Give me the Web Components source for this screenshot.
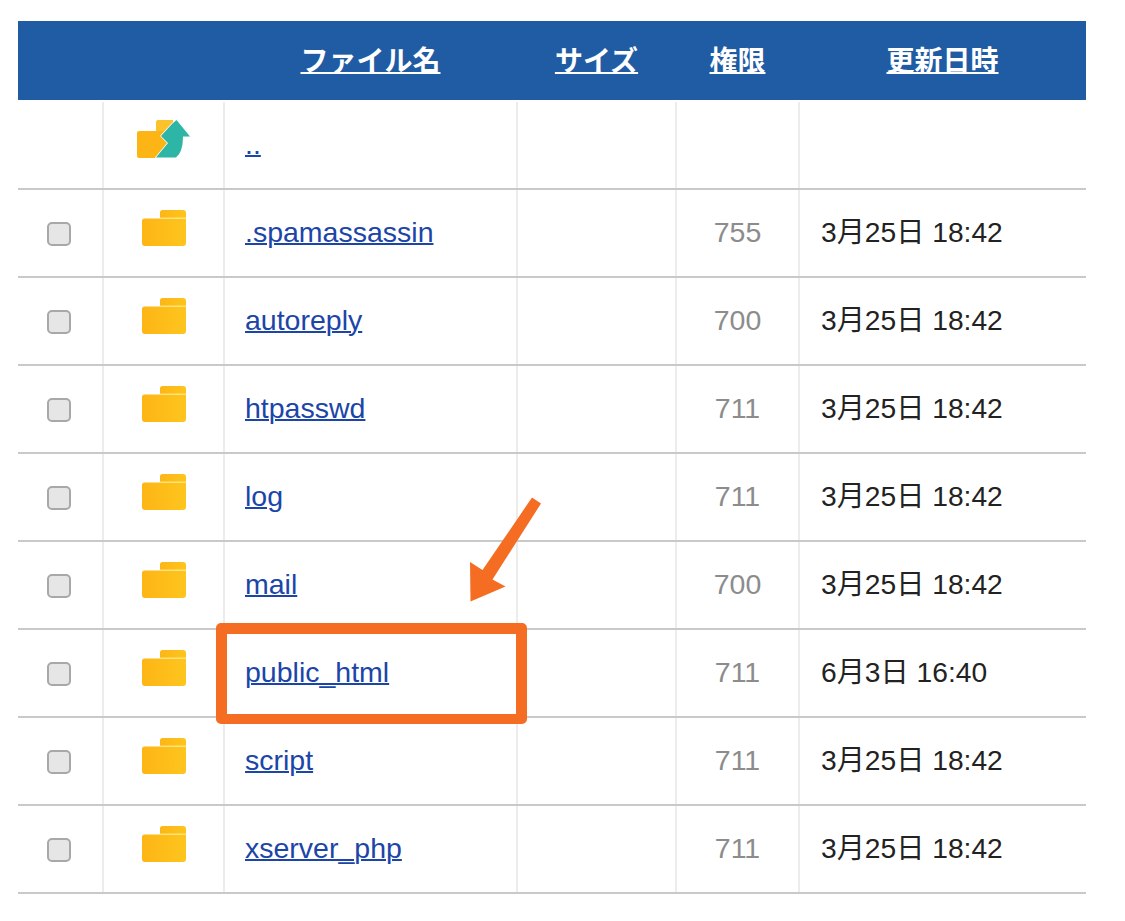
<!DOCTYPE html>
<html lang="ja">
<head>
<meta charset="utf-8">
<title>ファイル一覧</title>
<style>
  html, body { margin: 0; background: #fff; }
  body { font-family: "Liberation Sans", "Noto Sans CJK JP", sans-serif; }
</style>
</head>
<body>
<file-table>
  <file-header></file-header>
  <file-row name=".." parent></file-row>
  <file-row name=".spamassassin" perm="755" date="3月25日 18:42"></file-row>
  <file-row name="autoreply" perm="700" date="3月25日 18:42"></file-row>
  <file-row name="htpasswd" perm="711" date="3月25日 18:42"></file-row>
  <file-row name="log" perm="711" date="3月25日 18:42"></file-row>
  <file-row name="mail" perm="700" date="3月25日 18:42"></file-row>
  <file-row name="public_html" perm="711" date="6月3日 16:40"></file-row>
  <file-row name="script" perm="711" date="3月25日 18:42"></file-row>
  <file-row name="xserver_php" perm="711" date="3月25日 18:42"></file-row>
  <call-out></call-out>
</file-table>

<script>
class FileTable extends HTMLElement {
  constructor() {
    super();
    this.attachShadow({ mode: "open" }).innerHTML = `
      <style>
        :host {
          display: block;
          position: relative;
          box-sizing: border-box;
          width: 1086px;
          padding: 21px 0 0 18px;
        }
      </style>
      <slot></slot>
    `;
  }
}

class FileHeader extends HTMLElement {
  constructor() {
    super();
    const titles = ["", "", "ファイル名", "サイズ", "権限", "更新日時"];
    this.attachShadow({ mode: "open" }).innerHTML = `
      <style>
        :host {
          display: grid;
          grid-template-columns: 85px 121px 293px 159px 123px 287px;
          box-sizing: border-box;
          height: 79px;
          padding-bottom: 4px;
          margin-bottom: 2px;
          background: #1f5ca3;
          font: 700 28px/1 "Noto Sans CJK JP", sans-serif;
        }
        div { display: flex; align-items: center; justify-content: center; }
        a { color: #fff; text-decoration: underline; text-decoration-thickness: 2px; }
      </style>
      ${titles.map((t) => `<div>${t ? `<a>${t}</a>` : ""}</div>`).join("")}
    `;
  }
}

const FOLDER = `
  <svg width="45" height="37" viewBox="0 0 45 37">
    <defs>
      <linearGradient id="f" x1="0" x2="1" y1="0" y2="0">
        <stop offset="0" stop-color="#fdb515"/>
        <stop offset="1" stop-color="#fec51e"/>
      </linearGradient>
    </defs>
    <path d="M18 8V2.500Q18 0 20.500 0H41Q44 0 44 3V8Z" fill="url(#f)"/>
    <rect x="18" y="7.500" width="26" height="1.600" fill="#ffe27a"/>
    <path d="M0 11Q0 8.500 2.500 8.500H18V9H44V33Q44 36 41 36H3Q0 36 0 33Z" fill="url(#f)"/>
  </svg>`;

const PARENT = `
  <svg width="54" height="38" viewBox="0 0 54 38">
    <path d="M19 11V2Q19 0 21 0H36V11Z" fill="#fdc22b"/>
    <path d="M0 13Q0 11 2 11H30V38H2Q0 38 0 36Z" fill="#fdb515"/>
    <path d="M39.500 0L53 16.500H46Q46 32 39 37.500H19L31 23L24 16L35 4Z" fill="#2db5a5" stroke="#fff" stroke-width="1.500" stroke-linejoin="round" paint-order="stroke"/>
  </svg>`;

class FileRow extends HTMLElement {
  constructor() {
    super();
    const parent = this.hasAttribute("parent");
    const name = this.getAttribute("name");
    const perm = this.getAttribute("perm") || "";
    const date = this.getAttribute("date") || "";
    this.attachShadow({ mode: "open" }).innerHTML = `
      <style>
        :host {
          display: grid;
          grid-template-columns: 86px 121px 293px 159px 123px 286px;
          box-sizing: border-box;
          height: 88px;
          border-bottom: 2px solid #c9c9c9;
          font-size: 28.5px;
          line-height: 1;
        }
        div {
          display: flex;
          align-items: center;
          box-sizing: border-box;
          border-right: 2px solid #ececec;
        }
        div:last-child { border-right: 0; }
        .check { justify-content: center; padding: 2px 2px 0 0; }
        .perm { justify-content: center; }
        .icon { justify-content: center; align-items: flex-start; padding: ${parent ? "18px 0 0" : "20px 0 0 2px"}; }
        .name, .perm, .date { padding-bottom: 2px; }
        .name { padding-left: 20px; }
        .perm { color: #8c8c8c; }
        .date { padding-left: 21px; color: #222; white-space: pre; font-size: 28.2px; }
        a { color: #1c45a8; text-decoration: underline; text-decoration-thickness: 2px; }
        input {
          appearance: none;
          box-sizing: border-box;
          width: 24px;
          height: 24px;
          margin: 0;
          border: 2px solid #a8a8a8;
          border-radius: 5px;
          background: #e6e6e6;
        }
      </style>
      <div class="check">${parent ? "" : `<input type="checkbox">`}</div>
      <div class="icon">${parent ? PARENT : FOLDER}</div>
      <div class="name"><a>${name}</a></div>
      <div class="size"></div>
      <div class="perm">${perm}</div>
      <div class="date">${date}</div>
    `;
  }
}

// orange annotation drawn over the table
class CallOut extends HTMLElement {
  constructor() {
    super();
    this.attachShadow({ mode: "open" }).innerHTML = `
      <style>
        :host { position: absolute; left: 0; top: 0; pointer-events: none; }
        .box {
          position: absolute;
          left: 216px;
          top: 623px;
          width: 311px;
          height: 101px;
          box-sizing: border-box;
          border: 11px solid #f56d22;
          border-bottom-width: 10px;
          border-radius: 5px;
        }
        svg { position: absolute; left: 460px; top: 490px; }
      </style>
      <div class="box"></div>
      <svg width="90" height="120" viewBox="460 490 90 120">
        <path d="M532 497.500L541 503.500L492.500 579.500L505.500 586.500L470.500 601.500L470 562L482.500 570Z" fill="#f56d22"/>
      </svg>
    `;
  }
}

customElements.define("file-table", FileTable);
customElements.define("file-header", FileHeader);
customElements.define("file-row", FileRow);
customElements.define("call-out", CallOut);
</script>
</body>
</html>
